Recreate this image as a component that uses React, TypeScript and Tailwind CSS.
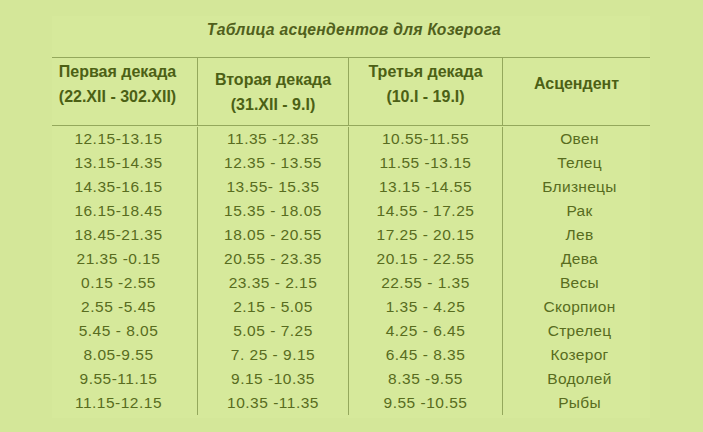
import React from "react";

const rows: [string, string, string, string][] = [
  ["12.15-13.15", "11.35 -12.35", "10.55-11.55", "Овен"],
  ["13.15-14.35", "12.35 - 13.55", "11.55 -13.15", "Телец"],
  ["14.35-16.15", "13.55- 15.35", "13.15 -14.55", "Близнецы"],
  ["16.15-18.45", "15.35 - 18.05", "14.55 - 17.25", "Рак"],
  ["18.45-21.35", "18.05 - 20.55", "17.25 - 20.15", "Лев"],
  ["21.35 -0.15", "20.55 - 23.35", "20.15 - 22.55", "Дева"],
  ["0.15 -2.55", "23.35 - 2.15", "22.55 - 1.35", "Весы"],
  ["2.55 -5.45", "2.15 - 5.05", "1.35 - 4.25", "Скорпион"],
  ["5.45 - 8.05", "5.05 - 7.25", "4.25 - 6.45", "Стрелец"],
  ["8.05-9.55", "7. 25 - 9.15", "6.45 - 8.35", "Козерог"],
  ["9.55-11.15", "9.15 -10.35", "8.35 -9.55", "Водолей"],
  ["11.15-12.15", "10.35 -11.35", "9.55 -10.55", "Рыбы"],
];

export default function App() {
  return (
    <div
      className="w-[703px] h-[432px] bg-[#d4e799] overflow-hidden"
      style={{ fontFamily: '"Liberation Sans", Arial, sans-serif' }}
    >
      <div className="ml-[52px] mt-[16px] w-[598px] bg-[#d6e99b]">
        <div className="h-[42px] pt-[4px] leading-[20px] text-center border-b border-[#94a85c] pl-[6px]">
          <span className="italic font-bold text-[15.7px] text-[#50601c] tracking-[0.3px]">
            Таблица асцендентов для Козерога
          </span>
        </div>
        <div className="grid grid-cols-[145px_151px_154px_148px] text-[#4c6015] font-bold text-[16px] leading-[25px] h-[68px] border-b border-[#94a85c]">
          <div className="pt-[1px] pr-[14px] text-center">
            <div>Первая декада</div>
            <div>(22.XII - 302.XII)</div>
          </div>
          <div className="pt-[9px] text-center border-l border-[#94a85c]">
            <div>Вторая декада</div>
            <div>(31.XII - 9.I)</div>
          </div>
          <div className="pt-[1px] text-center border-l border-[#94a85c]">
            <div>Третья декада</div>
            <div>(10.I - 19.I)</div>
          </div>
          <div className="pt-[13px] text-center border-l border-[#94a85c]">
            <div>Асцендент</div>
          </div>
        </div>
        <div className="grid grid-cols-[145px_151px_154px_148px] text-[#586c20] text-[15.5px] leading-[24px] tracking-[0.5px] pt-[1px] pb-[3px]">
          <div className="pr-[12px] text-center">
            {rows.map((r, i) => (
              <div key={i}>{r[0]}</div>
            ))}
          </div>
          <div className="text-center border-l border-[#94a85c]">
            {rows.map((r, i) => (
              <div key={i}>{r[1]}</div>
            ))}
          </div>
          <div className="text-center border-l border-[#94a85c]">
            {rows.map((r, i) => (
              <div key={i}>{r[2]}</div>
            ))}
          </div>
          <div className="pl-[6px] text-center border-l border-[#94a85c] tracking-[0.3px]">
            {rows.map((r, i) => (
              <div key={i}>{r[3]}</div>
            ))}
          </div>
        </div>
      </div>
    </div>
  );
}
